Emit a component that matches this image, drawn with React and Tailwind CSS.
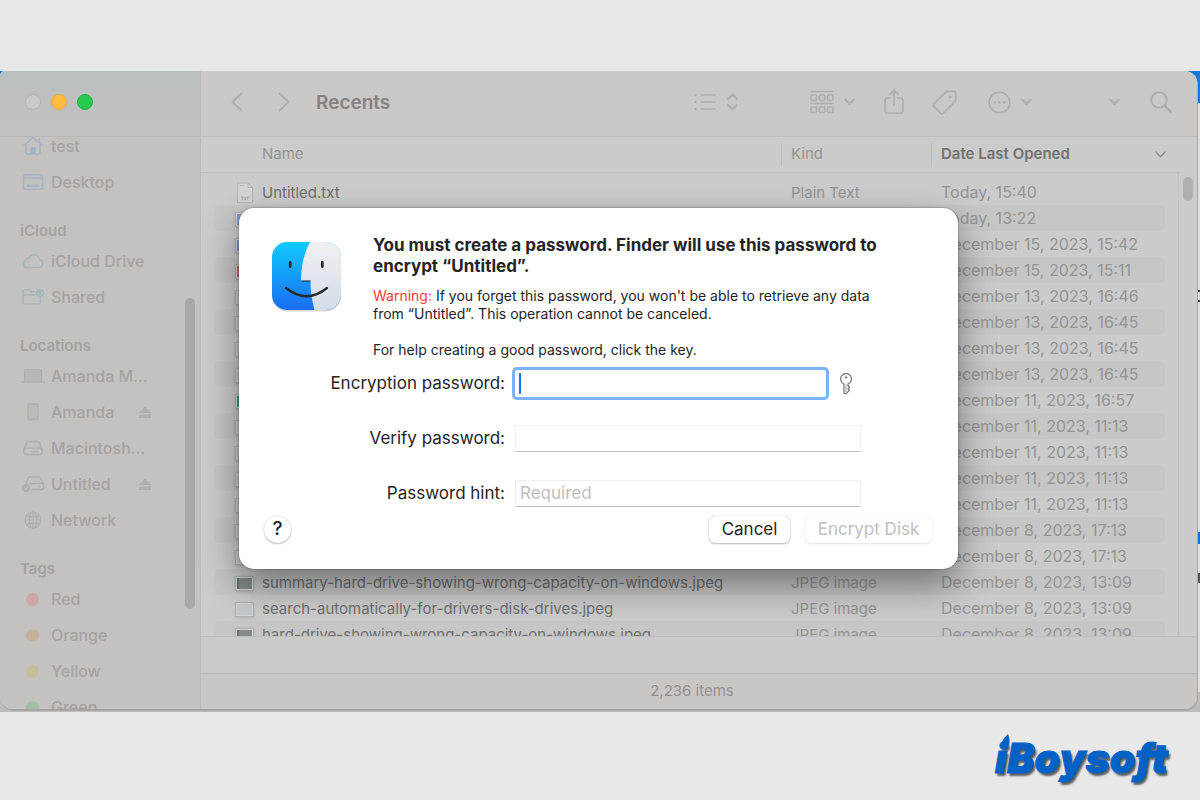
import React from "react";

const line = { fill: "none", stroke: "currentColor", strokeLinecap: "round", strokeLinejoin: "round" };

const ChevronDown = ({ className = "" }) => (
  <svg className={className} width="11" height="8" viewBox="0 0 11 8" {...line} strokeWidth="2">
    <path d="M1.2 1.5 5.5 6l4.3-4.5" />
  </svg>
);

const sidebarIcons = {
  house: (
    <svg width="22" height="20" viewBox="0 0 22 20" {...line} strokeWidth="1.5" className="text-[#a5b1c4]">
      <path d="M1.5 9.5 11 1.5l9.5 8M4 8v8.500q0 1.500 1.500 1.500h11q1.500 0 1.500-1.500V8M17.200 2.500v3.500" />
      <path d="M9 18v-6h4v6z" fill="currentColor" />
    </svg>
  ),
  desktop: (
    <svg width="22" height="18" viewBox="0 0 22 18" {...line} strokeWidth="1.500" className="text-[#a5b1c4]">
      <rect x="1.500" y="1.800" width="19" height="14.400" rx="2" />
      <path d="M1.500 5h19" />
      <path d="M5.500 12.800h11" strokeWidth="2.200" />
    </svg>
  ),
  cloud: (
    <svg width="22" height="16" viewBox="0 0 22 16" {...line} strokeWidth="1.400" className="text-[#a2b6bb]">
      <path d="M5.500 14.500h11.200a4 4 0 0 0 .8-7.900A5.600 5.600 0 0 0 7 4.800a3.200 3.200 0 0 0-3.300 3.400A3.300 3.300 0 0 0 5.500 14.500z" />
    </svg>
  ),
  shared: (
    <svg width="22" height="18" viewBox="0 0 22 18" {...line} strokeWidth="1.400" className="text-[#a2b6bb]">
      <path d="M13 3.800H9.500L8 2H3Q1 2 1 4v10q0 2 2 2h13.500q2 0 2-2v-4M1 7h12" />
      <circle cx="18" cy="5" r="3.300" />
      <circle cx="18" cy="4.200" r=".9" fill="currentColor" />
      <path d="M16.200 7q1.800-1.800 3.600 0" />
    </svg>
  ),
  laptop: (
    <svg width="24" height="16" viewBox="0 0 24 16" {...line} strokeWidth="1.200" className="text-[#b0aeae]">
      <rect x="3.500" y="1.500" width="17" height="12" rx="1.500" fill="#b9b8b8" />
      <path d="M1 14h22" strokeWidth="1.600" />
    </svg>
  ),
  phone: (
    <svg width="22" height="20" viewBox="0 0 22 20" {...line} strokeWidth="1.200" className="text-[#b0aeae]">
      <rect x="6" y="1.500" width="10" height="16.500" rx="2" fill="#bcbaba" />
      <path d="M9.500 2.500h3M9.500 16.500h3" />
    </svg>
  ),
  drive: (
    <svg width="22" height="16" viewBox="0 0 22 16" {...line} strokeWidth="1.300" className="text-[#aeacac]">
      <path d="M1.800 9.500 4.500 3q.7-1.500 2.200-1.500h8.600Q16.800 1.500 17.500 3l2.700 6.500" />
      <rect x="1.800" y="8.200" width="18.400" height="6.300" rx="2.500" />
      <path d="M9 11.400h.1M11.300 11.400h.1M13.600 11.400h.1M15.900 11.400h.1" strokeWidth="1.700" />
    </svg>
  ),
  checkedDrive: (
    <svg width="24" height="18" viewBox="0 0 24 18" {...line} strokeWidth="1.300" className="text-[#aeacac]">
      <path d="m5 8 2-4.500Q7.700 2 9.200 2h8.300q1.500 0 2.200 1.500L22.500 9M9 8.500h11.500q2.300 0 2.300 3t-2.300 3H11M18.500 11.500h.1" />
      <circle cx="5" cy="13" r="4" fill="currentColor" stroke="none" />
      <path d="m3.200 13 1.300 1.400 2.300-2.800" stroke="#c4c1c1" />
    </svg>
  ),
  globe: (
    <svg width="22" height="18" viewBox="0 0 22 18" {...line} strokeWidth="1.100" className="text-[#aeacac]">
      <circle cx="11" cy="9" r="8" />
      <ellipse cx="11" cy="9" rx="3.800" ry="8" />
      <path d="M11 1v16M3 9h16M4.500 4.800q6.500 2.600 13 0M4.500 13.200q6.500-2.600 13 0" />
    </svg>
  ),
  red: <span className="size-[13px] rounded-full bg-[#cfa5a5]" />,
  orange: <span className="size-[13px] rounded-full bg-[#c5b199]" />,
  yellow: <span className="size-[13px] rounded-full bg-[#c6bd9b]" />,
  green: <span className="size-[13px] rounded-full bg-[#a3bda4]" />,
};

const groups = [
  { items: [{ icon: "house", label: "test" }, { icon: "desktop", label: "Desktop" }] },
  { title: "iCloud", items: [{ icon: "cloud", label: "iCloud Drive" }, { icon: "shared", label: "Shared" }] },
  {
    title: "Locations",
    items: [
      { icon: "laptop", label: "Amanda M..." },
      { icon: "phone", label: "Amanda", eject: true },
      { icon: "drive", label: "Macintosh..." },
      { icon: "checkedDrive", label: "Untitled", eject: true },
      { icon: "globe", label: "Network" },
    ],
  },
  {
    title: "Tags",
    items: [
      { icon: "red", label: "Red" },
      { icon: "orange", label: "Orange" },
      { icon: "yellow", label: "Yellow" },
      { icon: "green", label: "Green" },
    ],
  },
];

const files = [
  { thumb: "text", name: "Untitled.txt", kind: "Plain Text", date: "Today, 15:40" },
  { thumb: "blue", date: "Today, 13:22" },
  { thumb: "blue", date: "December 15, 2023, 15:42" },
  { thumb: "red", date: "December 15, 2023, 15:11" },
  { thumb: "image", date: "December 13, 2023, 16:46" },
  { thumb: "image", date: "December 13, 2023, 16:45" },
  { thumb: "image", date: "December 13, 2023, 16:45" },
  { thumb: "image", date: "December 13, 2023, 16:45" },
  { thumb: "green", date: "December 11, 2023, 16:57" },
  { thumb: "image", date: "December 11, 2023, 11:13" },
  { thumb: "image", date: "December 11, 2023, 11:13" },
  { thumb: "image", date: "December 11, 2023, 11:13" },
  { thumb: "image", date: "December 11, 2023, 11:13" },
  { thumb: "image", date: "December 8, 2023, 17:13" },
  { thumb: "image", date: "December 8, 2023, 17:13" },
  { thumb: "dark", name: "summary-hard-drive-showing-wrong-capacity-on-windows.jpeg", kind: "JPEG image", date: "December 8, 2023, 13:09" },
  { thumb: "image", name: "search-automatically-for-drivers-disk-drives.jpeg", kind: "JPEG image", date: "December 8, 2023, 13:09" },
  { thumb: "dark", name: "hard-drive-showing-wrong-capacity-on-windows.jpeg", kind: "JPEG image", date: "December 8, 2023, 13:09" },
];

function Thumb({ type }) {
  if (type === "text")
    return (
      <svg width="18" height="22" viewBox="0 0 18 22">
        <path d="M1.500 1h10.500l4.500 4.500V20.500h-15z" fill="#d3d3d3" stroke="#b4b4b4" />
        <path d="M12 1v4.500h4.500" fill="none" stroke="#b4b4b4" />
        <path d="M3.500 3.500h5" stroke="#b9b9b9" strokeWidth=".8" />
        <path d="M5 15h2.400M6.200 15v3M8 15l2 3M10 15l-2 3M10.600 15H13M11.800 15v3" stroke="#a0a0a0" strokeWidth=".9" />
      </svg>
    );
  const fill = {
    blue: "bg-[#7f9cc9]",
    red: "bg-[#c9716f]",
    green: "bg-[#45a583]",
    image: "bg-[#c6c8c9]",
    dark: "bg-[#868a8a] border-l-2 border-[#5d7378]",
  }[type];
  return (
    <span className="flex h-[15px] w-[19px] border border-[#b0b0b0] bg-[#d2d2d2] p-px shadow-sm">
      <span className={"flex-1 " + fill} />
    </span>
  );
}

function Sidebar() {
  return (
    <aside className="relative flex w-[201px] shrink-0 flex-col border-r border-[#bdbaba] bg-[#c4c1c1]">
      <div className="flex h-[66px] shrink-0 items-center gap-2.5 border-b border-[#b8b5b5] bg-linear-to-b from-[#b9c0c1] via-[#bec0bf] to-[#c3c0c0] pb-[3px] pl-[25px]">
        <button aria-label="Close" className="size-4 rounded-full border border-[#b5b5b5] bg-[#c9caca]" />
        <button aria-label="Minimize" className="size-4 rounded-full border border-[#eba936] bg-[#febc40]" />
        <button aria-label="Zoom" className="size-4 rounded-full border border-[#1fb43f] bg-[#27c94f]" />
      </div>
      <nav className="min-h-0 flex-1 overflow-hidden text-[16px] font-medium text-[#a5a3a3]">
        {groups.map((g, i) => (
          <section key={i} className="first:-mt-[9px]">
            {g.title && (
              <h2 className="flex h-[43px] items-end pb-0.5 pl-5 text-[15px] leading-5 font-semibold text-[#a3a1a1]">{g.title}</h2>
            )}
            <ul>
              {g.items.map((it) => (
                <li key={it.label} className="flex h-9 items-center pl-5">
                  <span className="mr-[6px] flex w-[25px] shrink-0 justify-center">{sidebarIcons[it.icon]}</span>
                  <a href="#" className="w-[88px] whitespace-nowrap">{it.label}</a>
                  {it.eject && (
                    <button aria-label={"Eject " + it.label}>
                      <svg width="12" height="12" viewBox="0 0 12 12" fill="#b2afaf">
                        <path d="M6 0 12 7H0zM0 8.500h12V12H0z" />
                      </svg>
                    </button>
                  )}
                </li>
              ))}
            </ul>
          </section>
        ))}
      </nav>
      <span className="absolute top-[227px] right-[5px] h-[311px] w-2.5 rounded-full bg-[#a9a8a8]" />
    </aside>
  );
}

function Toolbar() {
  return (
    <header className="flex h-[66px] shrink-0 items-center border-b border-[#bebcbc] bg-[#cac7c7] pr-[25px] pb-[3px] pl-[30px] text-[#b0adad]">
      <button aria-label="Back" className="mr-[35px]">
        <svg width="12" height="20" viewBox="0 0 12 20" {...line} strokeWidth="2"><path d="M10.500 1.500 1.500 10l9 8.500" /></svg>
      </button>
      <button aria-label="Forward">
        <svg width="12" height="20" viewBox="0 0 12 20" {...line} strokeWidth="2"><path d="m1.500 1.500 9 8.500-9 8.500" /></svg>
      </button>
      <h1 className="ml-[26px] pt-0.5 text-[19px] font-semibold text-[#848282]">Recents</h1>
      <button aria-label="View as list" className="mr-[72px] ml-auto flex items-center gap-[11px]">
        <svg width="22" height="18" viewBox="0 0 22 18" {...line} strokeWidth="1.600">
          <path d="M7 2h14M7 9h14M7 16h14" />
          <path d="M1.500 2h.1M1.500 9h.1M1.500 16h.1" strokeWidth="2.500" />
        </svg>
        <svg width="11" height="18" viewBox="0 0 11 18" {...line} strokeWidth="2"><path d="m1.200 6 4.300-4.500L9.800 6M1.200 12l4.300 4.500L9.800 12" /></svg>
      </button>
      <button aria-label="Group" className="mr-[29px] flex items-center gap-[10px]">
        <svg width="24" height="24" viewBox="0 0 24 24" {...line} strokeWidth="1.600">
          <path d="M1 1.500h22M1 13.500h22" />
          <rect x="1" y="5" width="5.500" height="5.500" rx="1" /><rect x="9.300" y="5" width="5.500" height="5.500" rx="1" /><rect x="17.500" y="5" width="5.500" height="5.500" rx="1" />
          <rect x="1" y="17" width="5.500" height="5.500" rx="1" /><rect x="9.300" y="17" width="5.500" height="5.500" rx="1" /><rect x="17.500" y="17" width="5.500" height="5.500" rx="1" />
        </svg>
        <ChevronDown />
      </button>
      <button aria-label="Share" className="mr-7">
        <svg width="20" height="26" viewBox="0 0 20 26" {...line} strokeWidth="1.700">
          <path d="M6.500 9H3.500Q1 9 1 11.500v10Q1 24 3.500 24h13q2.500 0 2.500-2.500v-10Q19 9 16.500 9h-3M10 16.500V1.500M6 5.200l4-4 4 4" />
        </svg>
      </button>
      <button aria-label="Tags" className="mr-[31px]">
        <svg width="25" height="25" viewBox="0 0 25 25" {...line} strokeWidth="1.700">
          <path d="M13.500 2.300q.9-.9 2.200-1h5.800q2.300 0 2.300 2.300v5.700q0 1.200-.9 2.100L11.300 23q-1.400 1.300-2.800 0L2 16.600q-1.300-1.400 0-2.800z" />
          <circle cx="18" cy="7" r="1.100" fill="currentColor" strokeWidth="1" />
        </svg>
      </button>
      <button aria-label="More" className="mr-[77px] flex items-center gap-[10px]">
        <svg width="23" height="23" viewBox="0 0 23 23" {...line} strokeWidth="1.600">
          <circle cx="11.500" cy="11.500" r="10.300" />
          <path d="M6.800 11.500h.1M11.500 11.500h.1M16.200 11.500h.1" strokeWidth="2.700" />
        </svg>
        <ChevronDown />
      </button>
      <button aria-label="Overflow" className="mr-[30px]"><ChevronDown /></button>
      <button aria-label="Search">
        <svg width="22" height="22" viewBox="0 0 22 22" {...line} strokeWidth="2">
          <circle cx="9" cy="9" r="7.700" />
          <path d="m14.800 14.800 5.700 5.700" strokeWidth="2.600" />
        </svg>
      </button>
    </header>
  );
}

const stripe = "group-even:bg-[#c6c6c6]";

function FileList() {
  return (
    <div className="flex min-h-0 flex-1 overflow-hidden bg-[#cbcbcb]">
      <table className="min-w-0 flex-1 table-fixed border-collapse self-start text-[15px] text-[#949494]">
        <colgroup><col /><col className="w-[150px]" /><col className="w-[247px]" /></colgroup>
        <thead>
          <tr className="text-left">
            <th className="p-0 pb-1.5 font-normal"><div className="flex h-9 items-center border-b border-[#bebebe] pl-[61px]">Name</div></th>
            <th className="p-0 pb-1.5 font-normal"><div className="flex h-9 items-center border-b border-[#bebebe]"><span className="border-l border-[#bebebe] pl-[9px]">Kind</span></div></th>
            <th className="p-0 pb-1.5 font-semibold text-[#727272]">
              <div className="flex h-9 items-center border-b border-[#bebebe] pr-3">
                <span className="border-l border-[#bebebe] pl-[9px]">Date Last Opened</span>
                <svg className="ml-auto text-[#8c8c8c]" width="11" height="7" viewBox="0 0 11 7" {...line} strokeWidth="1.300"><path d="m1 1 4.500 4.800L10 1" /></svg>
              </div>
            </th>
          </tr>
        </thead>
        <tbody>
          {files.map((f, i) => (
            <tr key={i} className="group">
              <td className="p-0 pl-[13px]">
                <div className={"flex h-[26px] items-center rounded-l-md pt-0.5 pl-[21px] whitespace-nowrap text-[#6f6f6f] " + stripe}>
                  <span className="mr-2 flex w-[19px] justify-center"><Thumb type={f.thumb} /></span>
                  {f.name}
                </div>
              </td>
              <td className="p-0"><div className={"flex h-[26px] items-center pt-0.5 pl-2.5 " + stripe}>{f.kind}</div></td>
              <td className="p-0 pr-[13px]"><div className={"flex h-[26px] items-center rounded-r-md pl-2.5 text-[16px] whitespace-nowrap " + stripe}>{f.date}</div></td>
            </tr>
          ))}
        </tbody>
      </table>
      <div className="mt-[35px] flex w-[19px] justify-center border-l border-[#bfbfbf] pt-[5px]">
        <span className="h-6 w-2.5 rounded-full bg-[#b0b0b0]" />
      </div>
    </div>
  );
}

function FinderIcon() {
  return (
    <svg className="absolute top-8 left-[31px]" width="74" height="76" viewBox="0 0 74 76" role="img" aria-label="Finder">
      <defs>
        <linearGradient id="face" x1="0" y1="0" x2="0" y2="1"><stop stopColor="#0fcbfd" /><stop offset="1" stopColor="#1a6df2" /></linearGradient>
        <linearGradient id="side" x1="0" y1="0" x2="0" y2="1"><stop stopColor="#f1f0f2" /><stop offset="1" stopColor="#d3dce8" /></linearGradient>
        <clipPath id="tile"><rect x="2" y="2" width="69" height="68" rx="15" /></clipPath>
      </defs>
      <rect x="2" y="3.500" width="69" height="68" rx="15" fill="#000" opacity=".16" />
      <g clipPath="url(#tile)">
        <rect x="2" y="2" width="69" height="68" fill="url(#face)" />
        <path d="M40 2Q31 19 31 39.500q0 1.500 1.500 1.500h8q0 15 4 29H71V2z" fill="url(#side)" />
      </g>
      <path d="M31.500 41h9" stroke="#1d3c59" strokeWidth="1.200" />
      <path d="M20.200 22.500v4M52.300 22.500v4" stroke="#27282c" strokeWidth="2.800" strokeLinecap="round" />
      <path d="M16 48q20.500 16.500 41 0" fill="none" stroke="#27282c" strokeWidth="2.300" strokeLinecap="round" />
    </svg>
  );
}

const field = "h-[27px] w-[346px] rounded-none border border-[#f0f0f0] border-b-[#c4c4c4] bg-white px-1 pb-0.5 text-[17px] text-[#262626] outline-none placeholder:text-[#bfbfbf]";
const label = "w-[266px] shrink-0 text-right text-[17px]";

function PasswordDialog() {
  return (
    <form role="dialog" aria-labelledby="dialog-title" onSubmit={(e) => e.preventDefault()} className="relative w-[719px] rounded-[15px] bg-white pt-[27px] pb-[26px] text-[#242424] shadow-[0_0_2px_rgba(0,0,0,0.5),0_16px_36px_rgba(0,0,0,0.42)]">
      <FinderIcon />
      <div className="pr-12 pl-[134px]">
        <h2 id="dialog-title" className="text-[17px] leading-[21px] font-bold">
          You must create a password. Finder will use this password to<br />encrypt “Untitled”.
        </h2>
        <p className="mt-[10px] text-[14px] leading-[18px]">
          <span className="text-[#ff3b30]">Warning:</span> If you forget this password, you won't be able to retrieve any data<br />from “Untitled”. This operation cannot be canceled.
        </p>
        <p className="mt-[18px] text-[14px] leading-[18px]">For help creating a good password, click the key.</p>
      </div>
      <div className="mt-[11px] flex flex-col gap-7">
        <div className="flex items-center gap-2.5">
          <label htmlFor="pw" className={label}>Encryption password:</label>
          <div className="flex h-[27px] w-[311px] items-center rounded-xs bg-white ring-3 ring-[#7eb2f8]">
            <span className="ml-1 h-[21px] w-0.5 bg-[#0a7aff]" />
            <input id="pw" type="password" className="h-full min-w-0 flex-1 bg-transparent text-[17px] outline-none" />
          </div>
          <button type="button" aria-label="Password assistant" className="ml-[3px] text-[#7c7c7c]">
            <svg width="14" height="22" viewBox="0 0 14 22" {...line} strokeWidth="1.300">
              <path d="M5 20.200V11A5.400 5.400 0 1 1 9 11v1.800l1.500 1.500L9 15.700l1.500 1.500L9 18.600l-1.800 2.200z" />
              <circle cx="7" cy="4.300" r=".9" fill="currentColor" strokeWidth=".6" />
              <path d="M7 12v6.500" strokeWidth=".7" />
            </svg>
          </button>
        </div>
        <div className="flex items-center gap-2.5">
          <label htmlFor="verify" className={label}>Verify password:</label>
          <input id="verify" type="password" className={field} />
        </div>
        <div className="flex items-center gap-2.5">
          <label htmlFor="hint" className={label}>Password hint:</label>
          <input id="hint" type="text" placeholder="Required" className={field} />
        </div>
      </div>
      <div className="mt-[9px] flex items-center pr-[26px] pl-[25px] text-[17px]">
        <button type="button" aria-label="Help" className="flex size-[27px] items-center justify-center rounded-full bg-white text-[19px] font-medium shadow-[0_0_1px_rgba(0,0,0,0.25),0_1px_2px_rgba(0,0,0,0.25)]">?</button>
        <button type="button" className="mr-[15px] ml-auto h-[27px] w-[81px] rounded-md bg-white shadow-[0_0_1px_rgba(0,0,0,0.35),0_1px_2px_rgba(0,0,0,0.25)]">Cancel</button>
        <button type="submit" disabled className="h-[27px] w-[127px] rounded-md bg-white text-[#c0c0c0] shadow-[0_0_1px_rgba(0,0,0,0.15),0_1px_2px_rgba(0,0,0,0.1)]">Encrypt Disk</button>
      </div>
    </form>
  );
}

export default function App() {
  return (
    <div className="flex h-screen flex-col overflow-hidden bg-[#e8e8e8] pt-[71px] font-['Inter','Liberation_Sans',sans-serif]">
      <div className="relative flex min-h-0 flex-1 bg-[#dcdee0] pr-[3px] pb-0.5">
        <div className="absolute inset-x-0 top-0 h-8 bg-[#1b76d8]" />
        <div className="absolute right-0 bottom-0 left-0 h-5 bg-[#bcbcbc]" />
        <div className="absolute top-[219px] right-0 h-3 w-[3px] border-y-2 border-[#333]" />
        <div className="absolute top-[461px] right-0 h-3 w-0.5 bg-[#1b6fd0]" />
        <div className="absolute top-[502px] right-0 h-2.5 w-0.5 bg-[#555]" />
        <main className="relative flex min-w-0 flex-1 overflow-hidden rounded-tl-[5px] rounded-tr-xl rounded-b-[13px] border-b border-[#a2a2a2] bg-[#cbcbcb] shadow-[1px_1px_0_#a8a8a8]">
          <Sidebar />
          <div className="flex min-w-0 flex-1 flex-col">
            <Toolbar />
            <FileList />
            <div className="h-[37px] shrink-0 border-t border-[#bebebe] bg-[#cacaca]" />
            <footer className="flex h-9 shrink-0 items-center justify-center border-t border-[#b9b9b9] bg-[#c9c7c6] pr-[14px] text-[15px] text-[#929090]">2,236 items</footer>
          </div>
          <div className="absolute inset-x-0 top-[137px] flex justify-center">
            <PasswordDialog />
          </div>
        </main>
      </div>
      <div className="flex h-[88px] shrink-0 items-center justify-end pt-1 pr-8">
        <div className="relative text-[41px] leading-none font-black text-[#0062c6] italic [-webkit-text-stroke:1px_#0062c6] [text-shadow:2px_3px_2px_rgba(60,60,60,0.8)]">
          iBoysoft
          <svg className="absolute -top-1 left-[6px]" width="9" height="15" viewBox="0 0 9 15" fill="#0062c6"><path d="M7 0q2 5 1.500 9-1 5.500-4.500 5.500-4-.5-3.500-4.500Q1.500 5 7 0z" /></svg>
        </div>
      </div>
    </div>
  );
}
